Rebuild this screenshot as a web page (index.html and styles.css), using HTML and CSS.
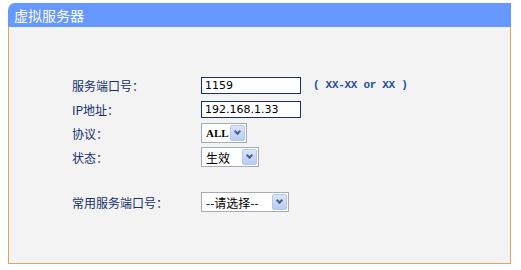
FILE: index.html
```html
<!DOCTYPE html>
<html lang="zh">
<head>
    <meta charset="UTF-8">
    <title>虚拟服务器</title>
    <link rel="stylesheet" href="styles.css">
</head>
<body>
<div class="panel">
    <div class="panel-title">虚拟服务器</div>
    <div class="panel-body">
        <div class="row">
            <label class="label">服务端口号：</label>
            <input class="text" type="text" value="1159">
            <span class="hint">( XX-XX or XX )</span>
        </div>
        <div class="row">
            <label class="label">IP地址：</label>
            <input class="text" type="text" value="192.168.1.33">
        </div>
        <div class="row">
            <label class="label">协议：</label>
            <div class="select sel-proto"><span>ALL</span><i class="arrow"></i></div>
        </div>
        <div class="row">
            <label class="label">状态：</label>
            <div class="select sel-state"><span>生效</span><i class="arrow"></i></div>
        </div>
        <div class="row row-common">
            <label class="label">常用服务端口号：</label>
            <div class="select sel-common"><span>--请选择--</span><i class="arrow"></i></div>
        </div>
    </div>
</div>
</body>
</html>
```
FILE: styles.css
```css
body {
    margin: 0;
    padding: 3px 10px 0 8px;
    background: #fff;
    font-family: "Noto Sans CJK SC", "DejaVu Sans", sans-serif;
    font-size: 12px;
}

.panel {
    width: 503px;
}

.panel-title {
    height: 24px;
    line-height: 24px;
    background: #6699ff;
    color: #fff;
    font-size: 14px;
    padding-left: 6px;
    border-top-left-radius: 7px;
}

.panel-body {
    height: 237px;
    background: #f3f3f3;
    border: 1px solid #e4a25a;
    border-top: none;
    padding: 46px 0 0 63px;
    box-sizing: border-box;
}

.row {
    display: flex;
    align-items: center;
    height: 24px;
}

.row-common {
    margin-top: 21px;
}

.label {
    width: 129px;
    color: #142f6e;
    font-size: 12px;
}

.text {
    width: 100px;
    height: 17px;
    box-sizing: border-box;
    border: 1px solid #1a3065;
    background: #fff;
    padding: 0 3px;
    margin: 0;
    font-family: "DejaVu Sans", sans-serif;
    font-size: 11px;
    color: #000;
}

.hint {
    margin-left: 12px;
    color: #1f4fa0;
    font-family: "Liberation Mono", monospace;
    font-size: 11px;
    font-weight: bold;
    letter-spacing: -0.3px;
}

.select {
    display: flex;
    align-items: center;
    justify-content: space-between;
    height: 20px;
    box-sizing: border-box;
    border: 1px solid #a5acb5;
    background: #fff;
    padding: 0 1px 0 4px;
    font-size: 12px;
    color: #000;
}

.sel-proto {
    width: 46px;
}

.sel-proto span {
    font-family: "Liberation Serif", serif;
    font-size: 11px;
    font-weight: bold;
}

.sel-state {
    width: 58px;
}

.sel-common {
    width: 88px;
}

.arrow {
    width: 15px;
    height: 16px;
    border-radius: 2px;
    background: linear-gradient(#dbe5fb, #b7cbf5);
    border: 1px solid #b5c6ec;
    box-sizing: border-box;
    position: relative;
}

.arrow::after {
    content: "";
    position: absolute;
    left: 4px;
    top: 3px;
    width: 3px;
    height: 3px;
    border-right: 2px solid #4d6185;
    border-bottom: 2px solid #4d6185;
    transform: rotate(45deg);
}
```
